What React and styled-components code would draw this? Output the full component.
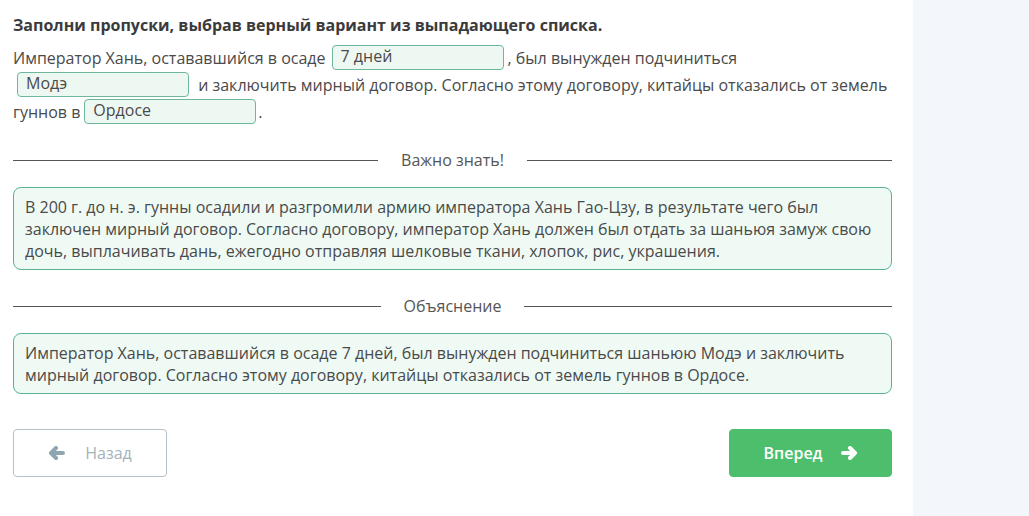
import React from 'react';
import styled, { createGlobalStyle } from 'styled-components';

const GlobalStyle = createGlobalStyle`
  html, body {
    margin: 0;
    padding: 0;
    background: #fff;
  }
  body {
    font-family: "Open Sans", "Noto Sans", sans-serif;
    color: #4a4a4a;
  }
`;

const Page = styled.div`
  display: flex;
  width: 1029px;
  height: 516px;
  overflow: hidden;
`;

const Main = styled.main`
  width: 879px;
  padding: 14px 21px 0 13px;
  flex-shrink: 0;
`;

const Side = styled.aside`
  flex: 1;
  background: #f3f6fa;
`;

const Title = styled.h1`
  margin: 0 0 9px;
  font-size: 16px;
  line-height: 22px;
  font-weight: 700;
  color: #3b3b3b;
`;

const Question = styled.p`
  margin: 0;
  font-size: 16px;
  line-height: 27px;
  color: #4a4a4a;
`;

const Select = styled.span`
  display: inline-block;
  box-sizing: border-box;
  width: 172px;
  height: 25px;
  margin: 0 ${({ gapRight }) => gapRight ?? 4}px 0 ${({ gapLeft }) => gapLeft ?? 4}px;
  padding: 0 8px;
  border: 1px solid #6db89b;
  border-radius: 4px;
  background: #eef8f3;
  vertical-align: 2px;
  font-size: 16px;
  line-height: 20px;
  color: #4a4a4a;
`;

const Divider = styled.div`
  display: flex;
  align-items: center;
  gap: 23px;
  margin: ${({ top }) => top}px 0 16px;
  font-size: 16px;
  line-height: 22px;
  color: #555;

  &::before,
  &::after {
    content: '';
    flex: 1;
    height: 1px;
    background: #555;
  }
`;

const InfoBox = styled.div`
  box-sizing: border-box;
  padding: 8px 11px 7px;
  border: 1px solid #58b393;
  border-radius: 8px;
  background: #effaf5;
  font-size: 16px;
  line-height: 22px;
  color: #4a4a4a;
`;

const Nav = styled.div`
  display: flex;
  justify-content: space-between;
  margin-top: 35px;
`;

const NavButton = styled.button`
  display: flex;
  align-items: center;
  justify-content: center;
  gap: ${({ primary }) => (primary ? 18 : 20)}px;
  box-sizing: border-box;
  width: ${({ primary }) => (primary ? 163 : 154)}px;
  height: 48px;
  padding: 0;
  border-radius: 4px;
  border: 1px solid ${({ primary }) => (primary ? '#4dbf6c' : '#b5c1c7')};
  background: ${({ primary }) => (primary ? '#4dbf6c' : '#fff')};
  color: ${({ primary }) => (primary ? '#fff' : '#a3b3bc')};
  font-family: "Open Sans", "Noto Sans", sans-serif;
  font-size: 16px;
  font-weight: ${({ primary }) => (primary ? 600 : 400)};

  svg {
    color: ${({ primary }) => (primary ? '#fff' : '#8ea6b2')};
  }
`;

const Arrow = ({ left }) => (
  <svg width="17" height="14" viewBox="0 0 17 14" aria-hidden="true">
    <path
      d={left ? 'M15 7 H3 M8 2 L3 7 L8 12' : 'M2 7 H14 M9 2 L14 7 L9 12'}
      fill="none"
      stroke="currentColor"
      strokeWidth="4"
      strokeLinecap="round"
      strokeLinejoin="round"
    />
  </svg>
);

export default function App() {
  return (
    <>
      <GlobalStyle />
      <Page>
        <Main>
          <Title>Заполни пропуски, выбрав верный вариант из выпадающего списка.</Title>
          <Question>
            Император Хань, остававшийся в осаде
            <Select gapLeft={6} gapRight={4}>7 дней</Select>, был вынужден подчиниться{' '}
            <Select gapRight={5}>Модэ</Select> и заключить мирный договор. Согласно этому
            договору, китайцы отказались от земель гуннов в
            <Select gapLeft={4} gapRight={2}>Ордосе</Select>.
          </Question>

          <Divider top={23}>Важно знать!</Divider>
          <InfoBox>
            В 200 г. до н. э. гунны осадили и разгромили армию императора Хань Гао-Цзу, в результате
            чего был заключен мирный договор. Согласно договору, император Хань должен был отдать за
            шаньюя замуж свою дочь, выплачивать дань, ежегодно отправляя шелковые ткани, хлопок, рис,
            украшения.
          </InfoBox>

          <Divider top={25}>Объяснение</Divider>
          <InfoBox>
            Император Хань, остававшийся в осаде 7 дней, был вынужден подчиниться шаньюю Модэ и
            заключить мирный договор. Согласно этому договору, китайцы отказались от земель гуннов в
            Ордосе.
          </InfoBox>

          <Nav>
            <NavButton type="button">
              <Arrow left />
              Назад
            </NavButton>
            <NavButton type="button" primary>
              Вперед
              <Arrow />
            </NavButton>
          </Nav>
        </Main>
        <Side />
      </Page>
    </>
  );
}
